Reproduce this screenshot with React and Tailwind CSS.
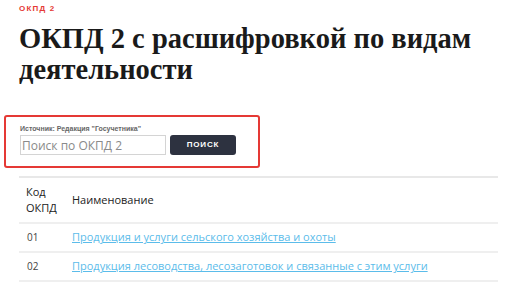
export default function App() {
    const rows = [
        { code: "01", name: "Продукция и услуги сельского хозяйства и охоты" },
        { code: "02", name: "Продукция лесоводства, лесозаготовок и связанные с этим услуги" },
    ];

    return (
        <div className="w-[516px] h-[290px] overflow-hidden bg-white pl-[19px] pr-[18px] font-['Open_Sans',sans-serif]">
            {/* HEADER */}
            <div className="pt-[4px] h-[20px] text-[8px] leading-[10px] font-bold tracking-[1.2px] text-[#e53935] font-['Liberation_Sans',sans-serif]">
                ОКПД 2
            </div>
            <h1 className="mt-[3px] text-[28.5px] leading-[31px] font-bold text-[#1a1a1a] font-['Liberation_Serif',serif]">
                ОКПД 2 с расшифровкой по видам деятельности
            </h1>

            {/* SEARCH */}
            <div className="mt-[30px] -ml-[15px] w-[256px] h-[53px] border-2 border-[#e53935] rounded-[3px] pl-[14px] pt-[7px]">
                <span className="block text-[7px] leading-[9px] font-bold text-[#666] font-['Liberation_Sans',sans-serif]">
                    Источник: Редакция "Госучетника"
                </span>
                <div className="flex mt-[2px] gap-[4px]">
                    <input className="w-[146px] h-[20px] border border-[#d4d4d4] px-[1px] text-[12px] text-[#444] placeholder:text-[#8a8a8a] outline-none" placeholder="Поиск по ОКПД 2" />
                    <button className="w-[66px] h-[20px] bg-[#2d3240] rounded-[3px] text-white text-[8px] font-bold tracking-[0.8px] font-['Liberation_Sans',sans-serif]">
                        ПОИСК
                    </button>
                </div>
            </div>

            {/* TABLE */}
            <div className="mt-[8px] border-t-2 border-[#e8e8e8]">
                <div className="flex items-center h-[46px] border-b-2 border-[#efefef]">
                    <div className="w-[53px] pl-[7px] text-[11px] leading-[16px] text-[#222]">Код<br />ОКПД</div>
                    <div className="text-[11px] text-[#222]">Наименование</div>
                </div>
                { rows.map( row =>
                    <div key={ row.code } className="flex items-center h-[29px] border-b-2 border-[#efefef]">
                        <div className="w-[53px] pl-[8px] text-[10px] text-[#444]">{ row.code }</div>
                        <a href="#" className="text-[11px] text-[#5bbcea] underline whitespace-nowrap">{ row.name }</a>
                    </div>
                ) }
            </div>
        </div>
    )
}
